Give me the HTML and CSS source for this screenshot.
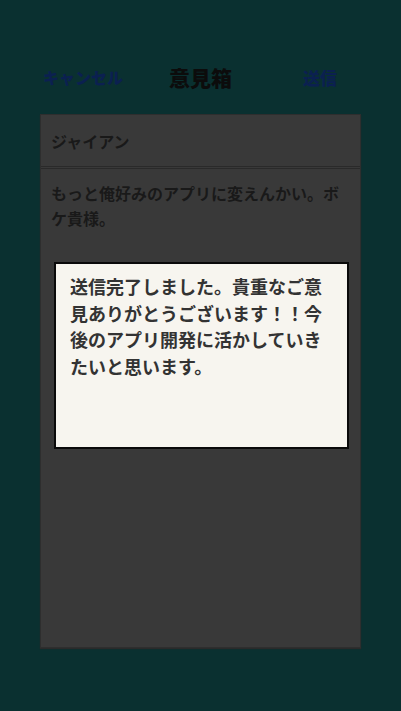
FILE: index.html
```html
<!DOCTYPE html>
<html lang="ja">
<head>
<meta charset="utf-8">
<link rel="stylesheet" href="styles.css">
</head>
<body>
<div class="page">
  <header class="nav">
    <span class="nav-btn cancel">キャンセル</span>
    <span class="nav-title">意見箱</span>
    <span class="nav-btn send">送信</span>
  </header>
  <section class="card">
    <div class="name-row">ジャイアン</div>
    <div class="message">もっと俺好みのアプリに変えんかい。ボケ貴様。</div>
  </section>
  <div class="dialog">送信完了しました。貴重なご意見ありがとうございます！！今後のアプリ開発に活かしていきたいと思います。</div>
</div>
</body>
</html>
```
FILE: styles.css
```css
html, body {
  margin: 0;
  padding: 0;
  background: #0a3030;
}
body {
  font-family: "Noto Sans CJK JP", "Noto Sans", sans-serif;
  width: 401px;
  height: 711px;
  overflow: hidden;
}
.page {
  position: relative;
  height: 711px;
  padding-top: 57px;
  box-sizing: border-box;
}
.nav {
  display: grid;
  grid-template-columns: 1fr auto 1fr;
  align-items: center;
  height: 40px;
  padding: 0 43px;
}
.nav-btn {
  font-size: 16px;
  font-weight: 900;
  color: #0b2050;
  line-height: 1;
}
.cancel { justify-self: start; }
.send { justify-self: end; font-size: 17px; margin-right: 21px; }
.nav-title {
  font-size: 21px;
  font-weight: 900;
  color: #0c0c0c;
  line-height: 1;
  letter-spacing: 0;
}
.card {
  margin: 17px 40px 0 40px;
  height: 534px;
  background: #393939;
  border: 1px solid #2e2e2e;
  box-sizing: border-box;
  box-shadow: 0 1px 1px #2a2a2a;
}
.name-row {
  height: 51px;
  padding-left: 10px;
  display: flex;
  align-items: center;
  font-size: 16px;
  font-weight: 700;
  color: #191919;
  border-bottom: 3px double #2a2a2a;
}
.message {
  padding: 12px 10px 0 10px;
  font-size: 16px;
  font-weight: 700;
  line-height: 25px;
  color: #191919;
}
.dialog {
  position: absolute;
  left: 54px;
  top: 262px;
  width: 295px;
  height: 187px;
  box-sizing: border-box;
  background: #f7f5ef;
  border: 2px solid #0a0a0a;
  padding: 9px 14px 0 14px;
  font-size: 18px;
  font-weight: 700;
  line-height: 26.7px;
  color: #333333;
}
```
